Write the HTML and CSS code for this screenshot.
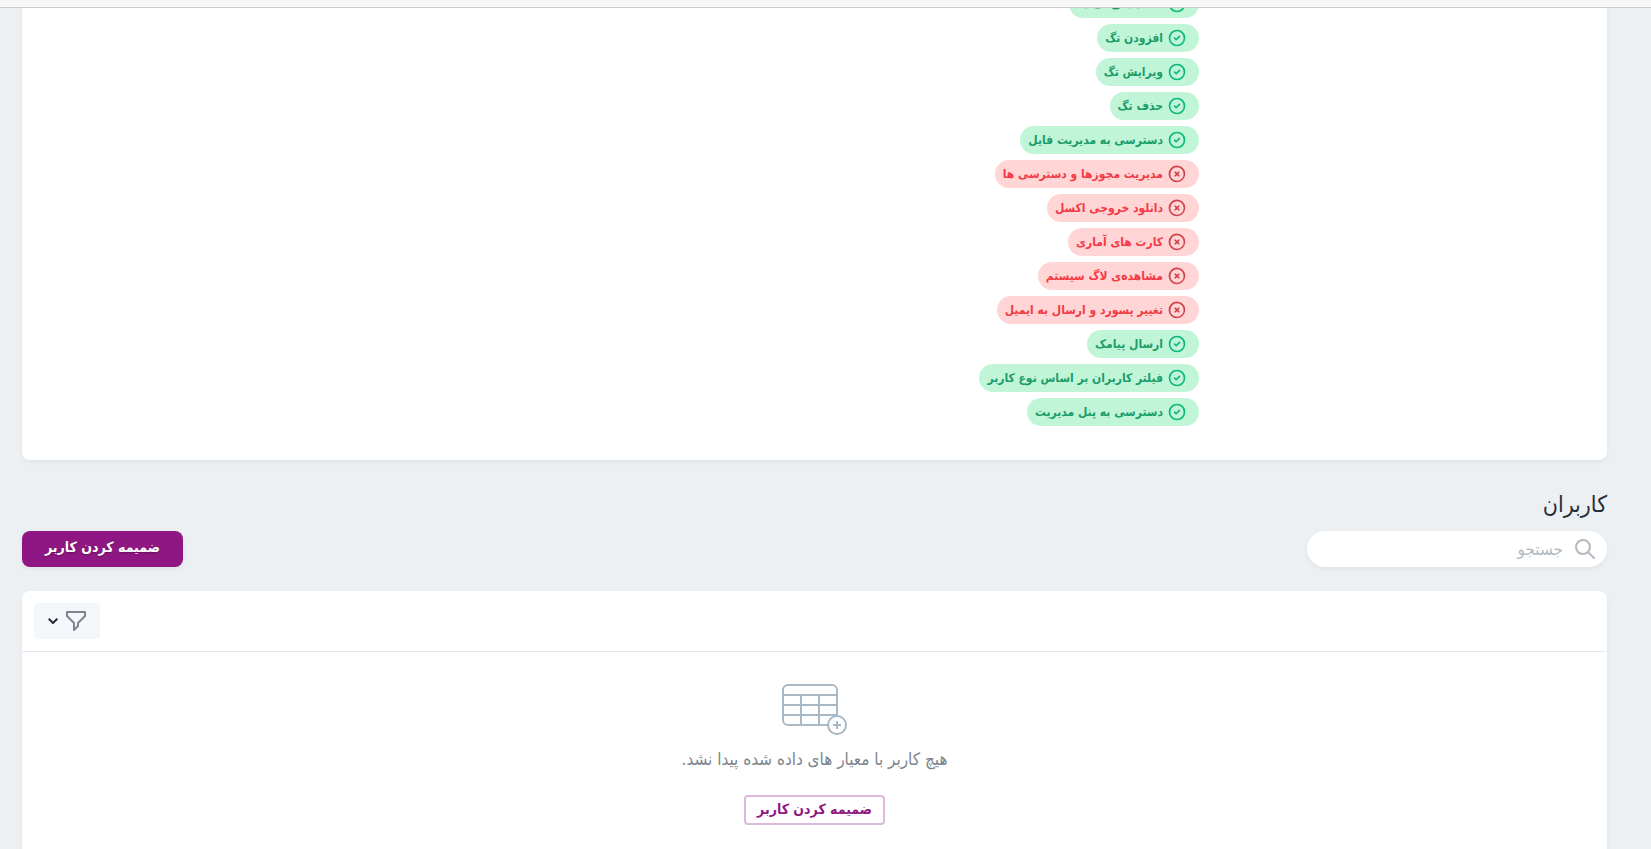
FILE: index.html
```html
<!DOCTYPE html>
<html lang="fa" dir="rtl">
<head>
<meta charset="utf-8">
<title>کاربران</title>
<link rel="stylesheet" href="styles.css">
</head>
<body>
<svg class="sprite" aria-hidden="true">
  <symbol id="yes" viewBox="0 0 24 24"><path d="M12 22a10 10 0 1 1 0-20 10 10 0 0 1 0 20zM12 20a8 8 0 1 0 0-16 8 8 0 0 0 0 16zm-2.3-8.7l1.300 1.290 3.300-3.300a1 1 0 0 1 1.400 1.420l-4 4a1 1 0 0 1-1.400 0l-2-2a1 1 0 0 1 1.400-1.420z"/></symbol>
  <symbol id="no" viewBox="0 0 24 24"><path d="M4.930 19.070A10 10 0 1 1 19.070 4.930 10 10 0 0 1 4.930 19.070zm1.410-1.410A8 8 0 1 0 17.660 6.340 8 8 0 0 0 6.340 17.660zM13.410 12l1.420 1.410a1 1 0 1 1-1.420 1.420L12 13.400l-1.410 1.420a1 1 0 1 1-1.420-1.420L10.600 12l-1.420-1.410a1 1 0 1 1 1.420-1.420L12 10.600l1.410-1.420a1 1 0 1 1 1.420 1.420L13.400 12z"/></symbol>
</svg>
<div class="topbar"></div>
<main class="page">
  <section class="card permissions">
    <ul class="pills">
      <li class="pill yes"><svg><use href="#yes"/></svg><span>مشاهده‌ی تگ ها</span></li>
      <li class="pill yes"><svg><use href="#yes"/></svg><span>افزودن تگ</span></li>
      <li class="pill yes"><svg><use href="#yes"/></svg><span>ویرایش تگ</span></li>
      <li class="pill yes"><svg><use href="#yes"/></svg><span>حذف تگ</span></li>
      <li class="pill yes"><svg><use href="#yes"/></svg><span>دسترسی به مدیریت فایل</span></li>
      <li class="pill no"><svg><use href="#no"/></svg><span>مدیریت مجوزها و دسترسی ها</span></li>
      <li class="pill no"><svg><use href="#no"/></svg><span>دانلود خروجی اکسل</span></li>
      <li class="pill no"><svg><use href="#no"/></svg><span>کارت های آماری</span></li>
      <li class="pill no"><svg><use href="#no"/></svg><span>مشاهده‌ی لاگ سیستم</span></li>
      <li class="pill no"><svg><use href="#no"/></svg><span>تغییر پسورد و ارسال به ایمیل</span></li>
      <li class="pill yes"><svg><use href="#yes"/></svg><span>ارسال پیامک</span></li>
      <li class="pill yes"><svg><use href="#yes"/></svg><span>فیلتر کاربران بر اساس نوع کاربر</span></li>
      <li class="pill yes"><svg><use href="#yes"/></svg><span>دسترسی به پنل مدیریت</span></li>
    </ul>
  </section>

  <h1 class="title">کاربران</h1>
  <div class="toolbar">
    <label class="search">
      <svg width="20" height="20" viewBox="0 0 20 20" fill="none" stroke="currentColor" stroke-width="2" aria-hidden="true"><circle cx="8" cy="8" r="7"/><path d="M13 13l6 6" stroke-linecap="round"/></svg>
      <input type="search" placeholder="جستجو" aria-label="جستجو">
    </label>
    <button class="btn primary" type="button">ضمیمه کردن کاربر</button>
  </div>

  <section class="card users">
    <div class="filters">
      <button class="filter" type="button" aria-label="فیلتر">
        <svg width="20" height="20" viewBox="0 0 20 20" fill="none" stroke="#7c858e" stroke-width="2" stroke-linejoin="round" aria-hidden="true"><path d="M1 1h18v4l-7 7v3l-4 4v-7L1 5z"/></svg>
        <svg width="10" height="6" viewBox="0 0 10 6" fill="none" stroke="#252d37" stroke-width="2" aria-hidden="true"><path d="M0.7 0.7L5 5l4.300-4.300"/></svg>
      </button>
    </div>
    <div class="empty">
      <svg width="65" height="51" viewBox="0 0 65 51" fill="none" stroke="#a8b9c5" stroke-width="2" aria-hidden="true"><path d="M46 41H6a5 5 0 0 1-5-5V6a5 5 0 0 1 5-5h44a5 5 0 0 1 5 5v25M1 11h54M1 21h54M1 31h54M19 11v30M37 11v30"/><circle cx="55" cy="41" r="9" fill="#fff"/><path d="M55 37v8M51 41h8"/></svg>
      <p class="message">هیچ کاربر با معیار های داده شده پیدا نشد.</p>
      <button class="btn outline" type="button">ضمیمه کردن کاربر</button>
    </div>
  </section>
</main>
</body>
</html>
```
FILE: styles.css
```css
* { box-sizing: border-box; }
body {
  margin: 0;
  height: 100vh;
  display: flex;
  flex-direction: column;
  overflow: hidden;
  background: #ecf0f3;
  color: #252d37;
  font-family: "DejaVu Sans Condensed", "DejaVu Sans", sans-serif;
}
.sprite { display: none; }
.topbar {
  flex: none;
  height: 8px;
  background: #f7f7f7;
  border-bottom: 1px solid #ccc;
}
.page {
  flex: 1;
  min-height: 0;
  overflow: hidden;
  padding: 0 44px 0 22px;
}
.card {
  background: #fff;
  border-radius: 8px;
  box-shadow: 0 2px 4px rgba(0, 0, 0, .05);
}
.permissions { margin-top: -18px; padding-bottom: 34px; }
.pills {
  list-style: none;
  margin: 0;
  padding: 0;
  margin-inline-start: 408px;
  display: flex;
  flex-direction: column;
  align-items: flex-start;
  gap: 6px;
}
.pill {
  display: flex;
  align-items: center;
  gap: 4px;
  height: 28px;
  padding: 0 12px 0 8px;
  border-radius: 14px;
  font-size: 12px;
  font-weight: 700;
  line-height: 20px;
  white-space: nowrap;
}
.pill svg { width: 20px; height: 20px; }
.pill.yes { background: #c1f5d8; color: #1b9d6b; }
.pill.yes svg { fill: #0bb77d; }
.pill.no { background: #ffd5d5; color: #f43b45; }
.pill.no svg { fill: #d0434b; }
.title {
  margin: 28px 0 11px;
  font-size: 23px;
  font-weight: 400;
  line-height: 32px;
}
.toolbar {
  display: flex;
  justify-content: space-between;
  align-items: center;
  margin-bottom: 24px;
}
.search {
  display: flex;
  align-items: center;
  gap: 12px;
  width: 300px;
  height: 36px;
  padding: 0 12px;
  border-radius: 18px;
  background: #fff;
  color: #b3b9c0;
  box-shadow: 0 2px 4px rgba(0, 0, 0, .05);
}
.search input {
  flex: 1;
  min-width: 0;
  padding: 0;
  border: 0;
  outline: 0;
  background: none;
  font: inherit;
  font-size: 17px;
  line-height: 24px;
}
.search input::placeholder { color: #b3b9c0; opacity: 1; }
.btn {
  padding: 0;
  border: 0;
  font: inherit;
  font-size: 14px;
  font-weight: 700;
  line-height: 20px;
  white-space: nowrap;
  cursor: pointer;
}
.primary {
  height: 36px;
  padding: 0 23px 4px;
  border-radius: 8px;
  background: #8f1783;
  color: #fff;
  text-shadow: 0 1px 2px rgba(0, 0, 0, .3);
  box-shadow: 0 2px 4px rgba(0, 0, 0, .05);
}
.filters {
  display: flex;
  justify-content: flex-end;
  padding: 12px;
  border-bottom: 1px solid #e3e7eb;
}
.filter {
  display: flex;
  align-items: center;
  gap: 8px;
  height: 36px;
  padding: 0 14px;
  border: 0;
  border-radius: 4px;
  background: #f4f7fa;
}
.empty {
  display: flex;
  flex-direction: column;
  align-items: center;
  padding: 32px 0 48px;
}
.message {
  margin: 12px 0 24px;
  color: #7c858e;
  font-size: 17px;
  line-height: 24px;
}
.outline {
  height: 30px;
  padding: 0 11px 2px;
  border: 2px solid #deb8dc;
  border-radius: 4px;
  background: #fff;
  color: #8f1783;
}
```
